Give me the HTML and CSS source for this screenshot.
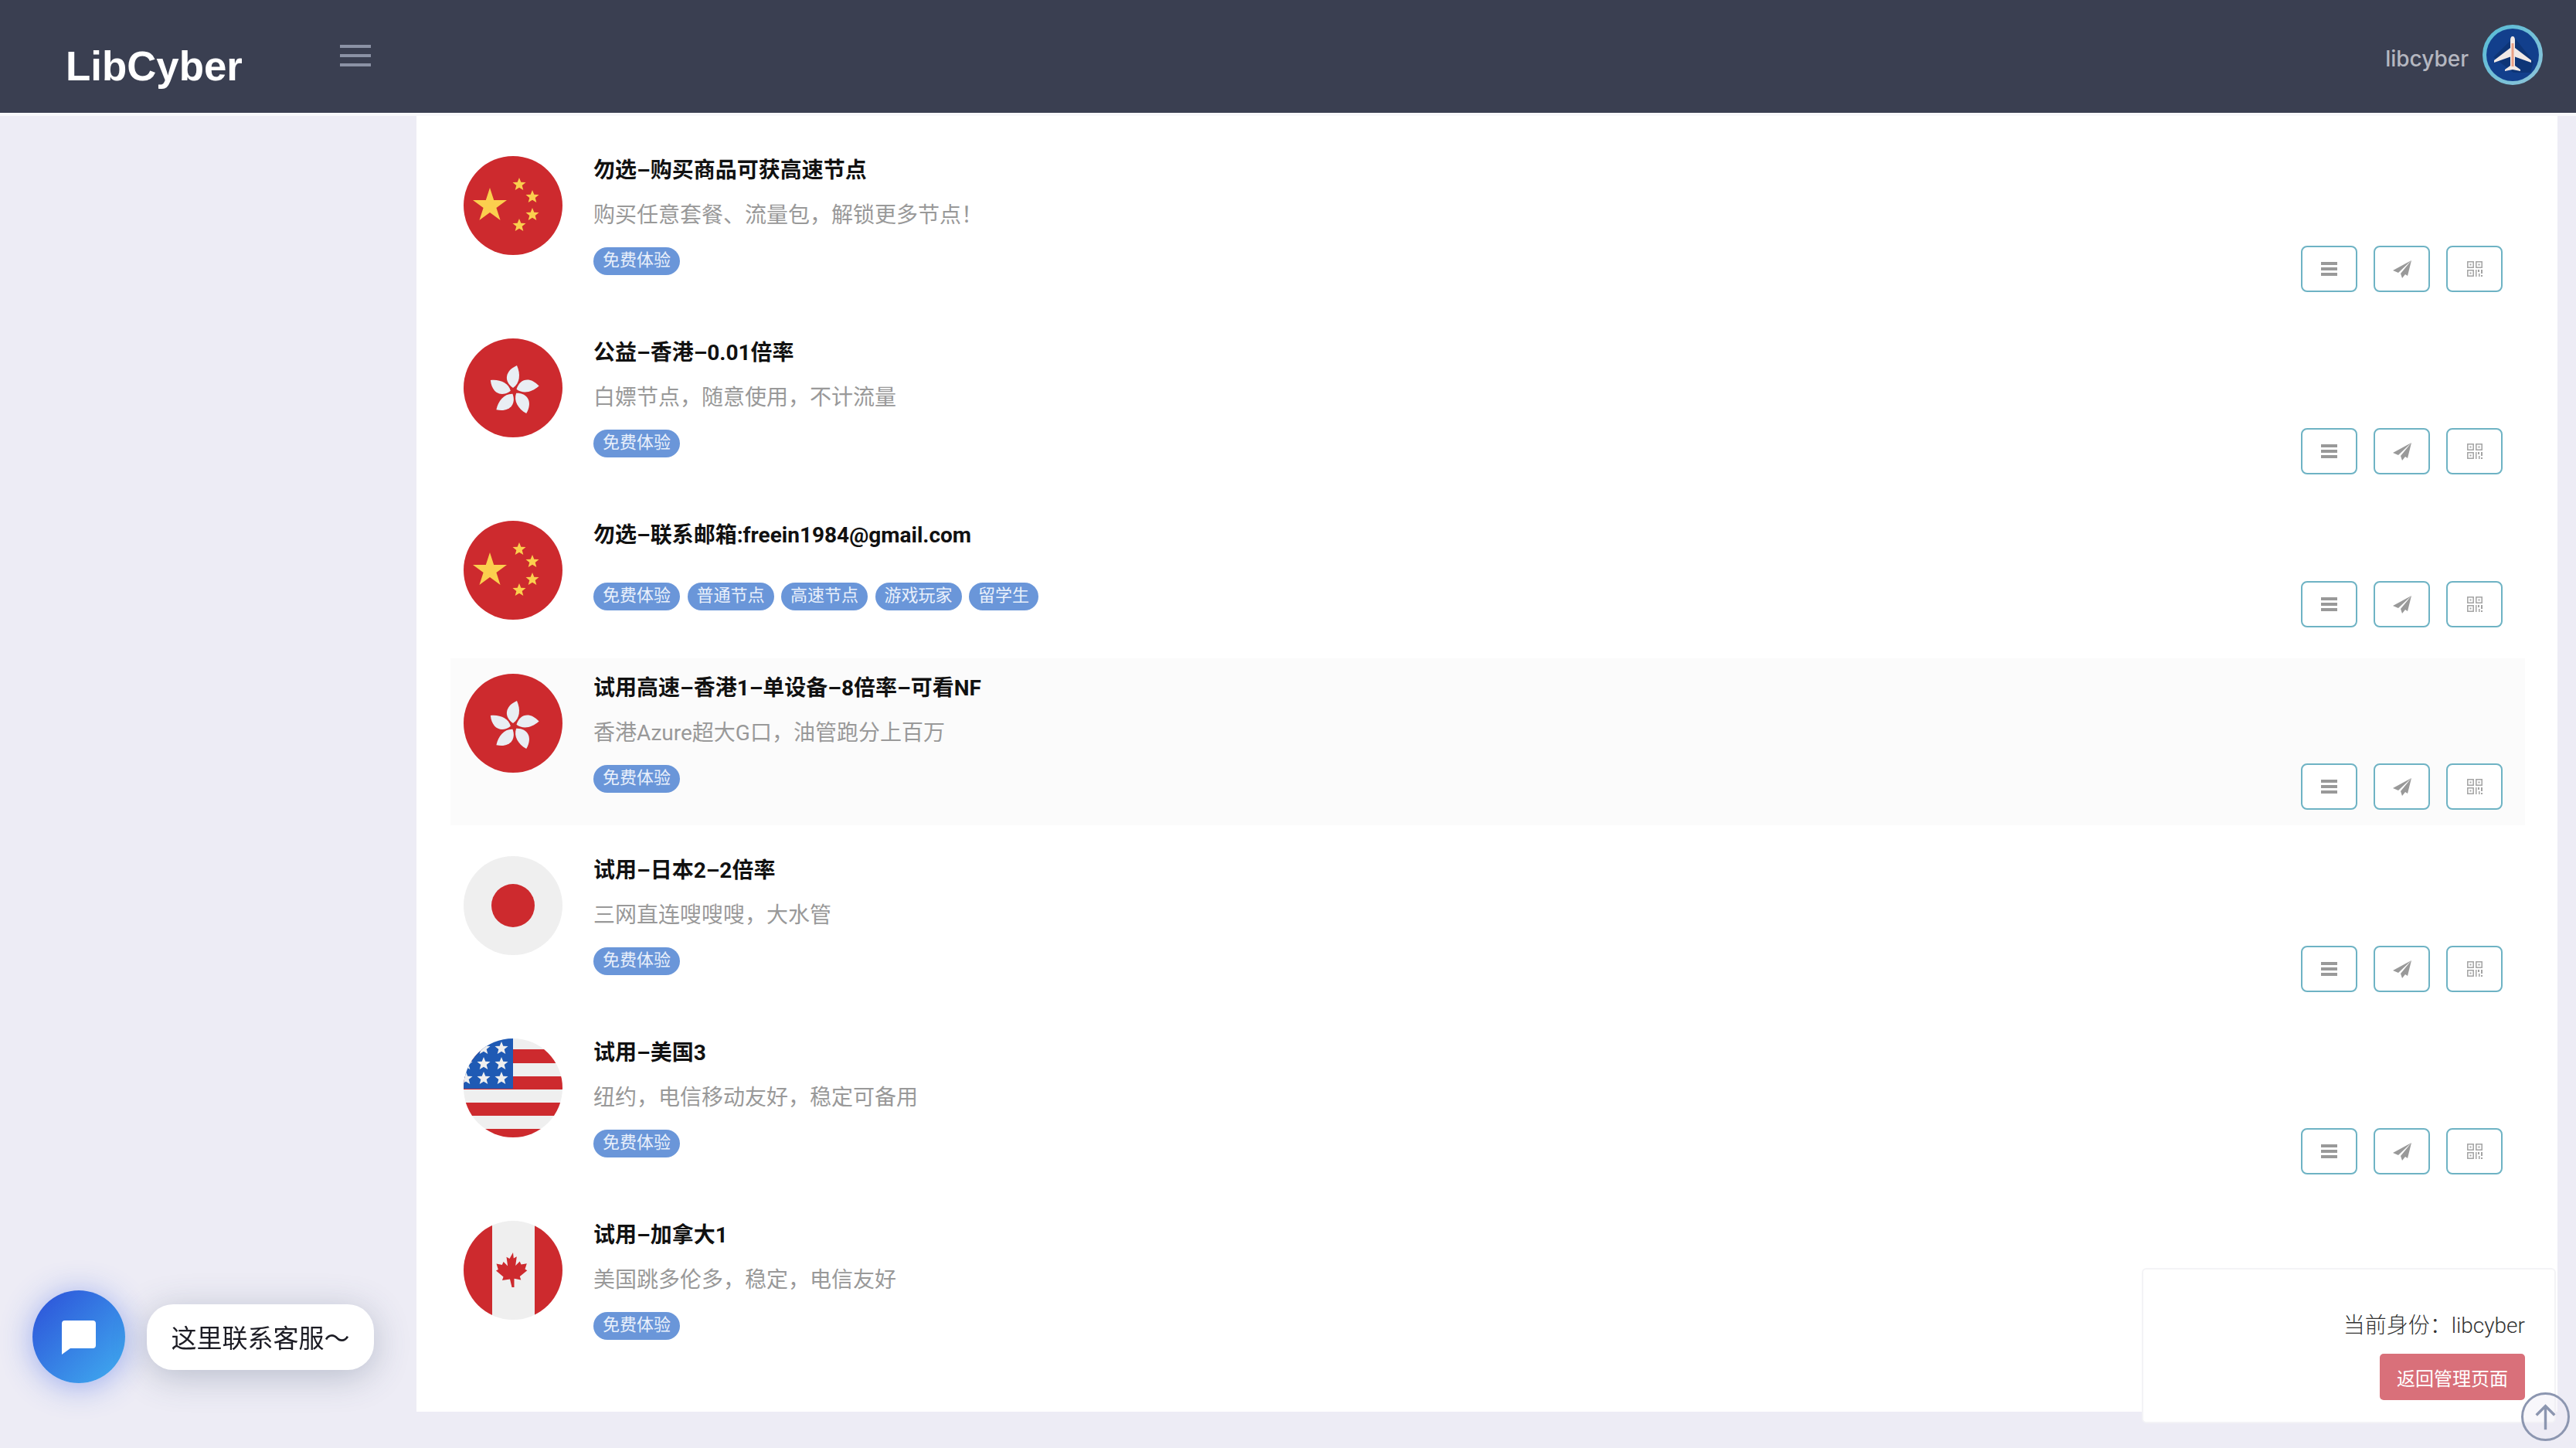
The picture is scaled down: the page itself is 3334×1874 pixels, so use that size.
FILE: index.html
```html
<!DOCTYPE html>
<html lang="zh-CN">
<head>
<meta charset="utf-8">
<title>LibCyber</title>
<link rel="stylesheet" href="styles.css">
</head>
<body>
<svg class="defs" width="0" height="0" aria-hidden="true">
  <defs>
    <symbol id="flag-cn" viewBox="0 0 128 128">
      <circle cx="64" cy="64" r="64" fill="#cd2a2e"/>
      <g fill="#fbcf4e">
        <path d="M34 41l5.200 16h16.800l-13.600 9.900 5.200 16-13.600-9.900-13.600 9.900 5.200-16L12 57h16.800z"/>
        <path d="M72 28l2.300 5.800 6.200.3-4.800 3.900 1.600 6-5.300-3.300-5.300 3.300 1.600-6-4.800-3.900 6.200-.3z"/>
        <path d="M89 44l2.300 5.800 6.200.3-4.800 3.900 1.600 6-5.300-3.300-5.300 3.300 1.600-6-4.800-3.900 6.200-.3z"/>
        <path d="M89 67l2.300 5.800 6.200.3-4.800 3.900 1.600 6-5.300-3.300-5.300 3.300 1.600-6-4.800-3.900 6.200-.3z"/>
        <path d="M72 81l2.300 5.800 6.200.3-4.800 3.900 1.600 6-5.300-3.300-5.300 3.300 1.600-6-4.800-3.900 6.200-.3z"/>
      </g>
    </symbol>
    <symbol id="flag-hk" viewBox="0 0 128 128">
      <circle cx="64" cy="64" r="64" fill="#cd2a2e"/>
      <g transform="translate(65 68)" fill="#e9eef3">
        <path d="M-1-4C-13-12-12-26 4-33 9-22 8-10-1-4z"/>
        <path transform="rotate(72)" d="M-1-4C-13-12-12-26 4-33 9-22 8-10-1-4z"/>
        <path transform="rotate(144)" d="M-1-4C-13-12-12-26 4-33 9-22 8-10-1-4z"/>
        <path transform="rotate(216)" d="M-1-4C-13-12-12-26 4-33 9-22 8-10-1-4z"/>
        <path transform="rotate(288)" d="M-1-4C-13-12-12-26 4-33 9-22 8-10-1-4z"/>
      </g>
    </symbol>
    <symbol id="flag-jp" viewBox="0 0 128 128">
      <circle cx="64" cy="64" r="64" fill="#efefef"/>
      <circle cx="64" cy="64" r="28" fill="#cd2a2e"/>
    </symbol>
    <symbol id="flag-us" viewBox="0 0 128 128">
      <clipPath id="us-clip"><circle cx="64" cy="64" r="64"/></clipPath>
      <g clip-path="url(#us-clip)">
        <rect width="128" height="128" fill="#efefef"/>
        <g fill="#cd2a2e">
          <rect y="14" width="128" height="18"/>
          <rect y="49" width="128" height="17"/>
          <rect y="83" width="128" height="17"/>
          <rect y="117" width="128" height="11"/>
        </g>
        <rect width="64" height="65" fill="#1f5ab4"/>
        <g fill="#efefef">
          <path d="M49 4l2.300 5.800 6.200.3-4.800 3.900 1.600 6-5.300-3.300-5.300 3.300 1.600-6-4.800-3.900 6.200-.3z"/>
          <path d="M26 4l2.300 5.800 6.200.3-4.800 3.900 1.600 6-5.300-3.300-5.300 3.300 1.600-6-4.800-3.900 6.200-.3z"/>
          <path d="M49 24l2.300 5.800 6.200.3-4.800 3.900 1.600 6-5.300-3.300-5.300 3.300 1.600-6-4.800-3.900 6.200-.3z"/>
          <path d="M26 24l2.300 5.800 6.200.3-4.800 3.900 1.600 6-5.300-3.300-5.300 3.300 1.600-6-4.800-3.900 6.200-.3z"/>
          <path d="M3 24l2.300 5.800 6.200.3-4.800 3.900 1.600 6-5.300-3.300-5.300 3.300 1.600-6-4.800-3.900 6.200-.3z"/>
          <path d="M49 43l2.300 5.800 6.200.3-4.800 3.900 1.600 6-5.300-3.300-5.300 3.300 1.600-6-4.800-3.900 6.200-.3z"/>
          <path d="M26 43l2.300 5.800 6.200.3-4.800 3.900 1.600 6-5.300-3.300-5.300 3.300 1.600-6-4.800-3.900 6.200-.3z"/>
          <path d="M3 43l2.300 5.800 6.200.3-4.800 3.900 1.600 6-5.300-3.300-5.300 3.300 1.600-6-4.800-3.900 6.200-.3z"/>
        </g>
      </g>
    </symbol>
    <symbol id="flag-ca" viewBox="0 0 128 128">
      <clipPath id="ca-clip"><circle cx="64" cy="64" r="64"/></clipPath>
      <g clip-path="url(#ca-clip)">
        <rect width="128" height="128" fill="#efefef"/>
        <rect width="37" height="128" fill="#cd2a2e"/>
        <rect x="92" width="36" height="128" fill="#cd2a2e"/>
        <path transform="translate(64 64)" fill="#cd2a2e" d="M0-23l-4.500 8-4-2.300 1.600 11.800-5.500-5.500-1.800 4-7.300-1.400 2.300 7.400-2.800 1.600 9.500 7.800-1.500 4.600 10-1.400L-1.500 22h3L1.500 10.800l8.800 1.800-1.500-4.600 9.500-7.800-2.800-1.600 2.300-7.400-7.300 1.400-1.800-4-5.500 5.500 1.600-11.800-4 2.300z"/>
      </g>
    </symbol>
    <symbol id="i-list" viewBox="0 0 21 18">
      <path d="M0 0h21v4H0zM0 7h21v4H0zM0 14h21v4H0z" fill="#999"/>
    </symbol>
    <symbol id="i-send" viewBox="0 0 24 23">
      <path d="M24 0 0 13l7 3zM24 0 10 17l2 6 4-5 3 2z" fill="#999"/>
    </symbol>
    <symbol id="i-qr" viewBox="0 0 20 20">
      <g fill="none" stroke="#a3a3a3" stroke-width="1.500">
        <rect x=".8" y=".8" width="7.400" height="7.400"/>
        <rect x="11.800" y=".8" width="7.400" height="7.400"/>
        <rect x=".8" y="11.800" width="7.400" height="7.400"/>
      </g>
      <path d="M3.500 3.500h2v2h-2zM14.500 3.500h2v2h-2zM3.500 14.500h2v2h-2zM11 11h1.500v9H11zM14 11h2v3h-2zM18 11h2v5h-2zM15 16h1.500v4H15zM18 18h2v2h-2z" fill="#a3a3a3"/>
    </symbol>
  </defs>
</svg>

<header class="topbar">
  <div class="brand">LibCyber</div>
  <button class="burger" type="button" aria-label="menu"><span></span><span></span><span></span></button>
  <div class="user">
    <span class="user-name">libcyber</span>
    <svg class="avatar" viewBox="0 0 78 78" width="78" height="78">
      <defs>
        <linearGradient id="ring" x1="0" y1="0" x2="1" y2="1">
          <stop offset="0" stop-color="#55bcd6"/>
          <stop offset="1" stop-color="#8fc4d9"/>
        </linearGradient>
      </defs>
      <circle cx="39" cy="39" r="39" fill="url(#ring)"/>
      <circle cx="39" cy="39" r="34" fill="#123f8c"/>
      <path d="M41 16 66 48 62 62 40 62 14 42z" fill="#0e3577"/>
      <path d="M39 15c2 0 3 2 3 5v10l21 16v3L42 41.500V53l7 5v2l-10-2-10 2v-2l7-5V41.500L15 49v-3l21-16V20c0-3 1-5 3-5z" fill="#f1e9e6"/>
      <path d="M37.500 24h3v30h-3z" fill="#ea9f83"/>
    </svg>
  </div>
</header>

<div class="layout">
  <aside class="sidebar"></aside>
  <main class="content">
    <article class="row">
      <svg class="flag"><use href="#flag-cn"/></svg>
      <div class="info">
        <h3 class="title">勿选–购买商品可获高速节点</h3>
        <p class="desc">购买任意套餐、流量包&#xFF0C;解锁更多节点&#xFF01;</p>
        <div class="tags"><span class="tag">免费体验</span></div>
      </div>
      <div class="actions">
        <button class="act" type="button"><svg class="ic-list"><use href="#i-list"/></svg></button>
        <button class="act" type="button"><svg class="ic-send"><use href="#i-send"/></svg></button>
        <button class="act" type="button"><svg class="ic-qr"><use href="#i-qr"/></svg></button>
      </div>
    </article>

    <article class="row">
      <svg class="flag"><use href="#flag-hk"/></svg>
      <div class="info">
        <h3 class="title">公益–香港–0.01倍率</h3>
        <p class="desc">白嫖节点&#xFF0C;随意使用&#xFF0C;不计流量</p>
        <div class="tags"><span class="tag">免费体验</span></div>
      </div>
      <div class="actions">
        <button class="act" type="button"><svg class="ic-list"><use href="#i-list"/></svg></button>
        <button class="act" type="button"><svg class="ic-send"><use href="#i-send"/></svg></button>
        <button class="act" type="button"><svg class="ic-qr"><use href="#i-qr"/></svg></button>
      </div>
    </article>

    <article class="row">
      <svg class="flag"><use href="#flag-cn"/></svg>
      <div class="info">
        <h3 class="title">勿选–联系邮箱:freein1984@gmail.com</h3>
        <p class="desc"></p>
        <div class="tags">
          <span class="tag">免费体验</span><span class="tag">普通节点</span><span class="tag">高速节点</span><span class="tag">游戏玩家</span><span class="tag">留学生</span>
        </div>
      </div>
      <div class="actions">
        <button class="act" type="button"><svg class="ic-list"><use href="#i-list"/></svg></button>
        <button class="act" type="button"><svg class="ic-send"><use href="#i-send"/></svg></button>
        <button class="act" type="button"><svg class="ic-qr"><use href="#i-qr"/></svg></button>
      </div>
    </article>

    <article class="row row-hover">
      <svg class="flag"><use href="#flag-hk"/></svg>
      <div class="info">
        <h3 class="title">试用高速–香港1–单设备–8倍率–可看NF</h3>
        <p class="desc">香港Azure超大G口&#xFF0C;油管跑分上百万</p>
        <div class="tags"><span class="tag">免费体验</span></div>
      </div>
      <div class="actions">
        <button class="act" type="button"><svg class="ic-list"><use href="#i-list"/></svg></button>
        <button class="act" type="button"><svg class="ic-send"><use href="#i-send"/></svg></button>
        <button class="act" type="button"><svg class="ic-qr"><use href="#i-qr"/></svg></button>
      </div>
    </article>

    <article class="row">
      <svg class="flag"><use href="#flag-jp"/></svg>
      <div class="info">
        <h3 class="title">试用–日本2–2倍率</h3>
        <p class="desc">三网直连嗖嗖嗖&#xFF0C;大水管</p>
        <div class="tags"><span class="tag">免费体验</span></div>
      </div>
      <div class="actions">
        <button class="act" type="button"><svg class="ic-list"><use href="#i-list"/></svg></button>
        <button class="act" type="button"><svg class="ic-send"><use href="#i-send"/></svg></button>
        <button class="act" type="button"><svg class="ic-qr"><use href="#i-qr"/></svg></button>
      </div>
    </article>

    <article class="row">
      <svg class="flag"><use href="#flag-us"/></svg>
      <div class="info">
        <h3 class="title">试用–美国3</h3>
        <p class="desc">纽约&#xFF0C;电信移动友好&#xFF0C;稳定可备用</p>
        <div class="tags"><span class="tag">免费体验</span></div>
      </div>
      <div class="actions">
        <button class="act" type="button"><svg class="ic-list"><use href="#i-list"/></svg></button>
        <button class="act" type="button"><svg class="ic-send"><use href="#i-send"/></svg></button>
        <button class="act" type="button"><svg class="ic-qr"><use href="#i-qr"/></svg></button>
      </div>
    </article>

    <article class="row">
      <svg class="flag"><use href="#flag-ca"/></svg>
      <div class="info">
        <h3 class="title">试用–加拿大1</h3>
        <p class="desc">美国跳多伦多&#xFF0C;稳定&#xFF0C;电信友好</p>
        <div class="tags"><span class="tag">免费体验</span></div>
      </div>
      <div class="actions">
        <button class="act" type="button"><svg class="ic-list"><use href="#i-list"/></svg></button>
        <button class="act" type="button"><svg class="ic-send"><use href="#i-send"/></svg></button>
        <button class="act" type="button"><svg class="ic-qr"><use href="#i-qr"/></svg></button>
      </div>
    </article>
  </main>
</div>

<div class="chat">
  <div class="chat-btn">
    <svg viewBox="0 0 44 44" width="44" height="44"><path d="M4 0h36a4 4 0 0 1 4 4v28a4 4 0 0 1-4 4H11L0 44V4a4 4 0 0 1 4-4z" fill="#fff"/></svg>
  </div>
  <div class="chat-bubble">这里联系客服&#xFF5E;</div>
</div>

<aside class="identity">
  <p class="identity-text">当前身份&#xFF1A;libcyber</p>
  <button class="back" type="button">返回管理页面</button>
</aside>

<button class="to-top" type="button" aria-label="top">
  <svg viewBox="0 0 58 58" width="57" height="57"><path d="M29 46V15M17 27 29 15l12 12" fill="none" stroke="#8c96b0" stroke-width="3.500"/></svg>
</button>
</body>
</html>
```
FILE: styles.css
```css
* { box-sizing: border-box; }

html, body { margin: 0; padding: 0; }

body {
  width: 3334px;
  height: 1874px;
  overflow: hidden;
  background: #edecf5;
  font-family: Roboto, "Noto Sans CJK SC", sans-serif;
  color: #333;
}

.defs { position: absolute; }

.topbar {
  height: 150px;
  padding: 0 43px 4px 85px;
  display: flex;
  align-items: center;
  background: #3a3f51;
  border-bottom: 4px solid #f8f8fb;
}

.brand {
  width: 355px;
  font-family: "Liberation Sans", sans-serif;
  font-size: 52.800px;
  font-weight: 700;
  color: #fff;
  margin-top: 28px;
}

.burger {
  width: 40px;
  height: 28px;
  padding: 0;
  margin-top: 2px;
  border: 0;
  background: none;
  display: flex;
  flex-direction: column;
  justify-content: space-between;
}

.burger span {
  display: block;
  height: 4px;
  background: #8b92a5;
}

.user {
  margin-left: auto;
  display: flex;
  align-items: center;
  gap: 18px;
}

.user-name {
  font-family: Inter, sans-serif;
  font-size: 28px;
  font-weight: 500;
  color: #b5b7c0;
  margin-top: 10px;
}

.avatar { display: block; }

.layout {
  display: flex;
  padding-right: 24px;
}

.sidebar { width: 539px; flex: none; }

.content {
  flex: 1;
  height: 1677px;
  padding: 32px 42px 0 44px;
  background: #fff;
}

.row {
  display: flex;
  margin-bottom: 20px;
  padding: 20px 29px 20px 17px;
}

.row-hover { background: #fbfbfb; }

.flag {
  width: 128px;
  height: 128px;
  flex: none;
  margin-right: 40px;
}

.info {
  flex: 1;
  display: flex;
  flex-direction: column;
  padding-bottom: 22px;
}

.title {
  margin: 2px 0 22px;
  font-size: 28px;
  line-height: 34px;
  font-weight: 700;
  color: #111;
}

.desc {
  margin: 0 0 22px;
  min-height: 0;
  font-size: 28px;
  line-height: 38px;
  color: #999;
}

.tags {
  display: flex;
  gap: 9.500px;
}

.tag {
  height: 36px;
  padding: 0 12px;
  border-radius: 18px;
  background: #6a96d9;
  color: #e9f0fb;
  font-size: 22px;
  line-height: 34px;
}

.actions {
  display: flex;
  align-items: flex-end;
  gap: 21px;
}

.act {
  width: 73px;
  height: 60px;
  padding: 0;
  border: 2px solid #6eb3c4;
  border-radius: 8px;
  background: #fff;
  display: flex;
  align-items: center;
  justify-content: center;
}

.ic-list { width: 21px; height: 18px; }
.ic-send { width: 24px; height: 23px; }
.ic-qr { width: 20px; height: 20px; }

.chat {
  position: fixed;
  left: 42px;
  top: 1670px;
  display: flex;
  align-items: center;
  gap: 28px;
}

.chat-btn {
  width: 120px;
  height: 120px;
  border-radius: 50%;
  background: linear-gradient(135deg, #2c4fd8, #40aef0);
  box-shadow: 0 4px 40px rgba(50, 90, 230, .45);
  display: flex;
  align-items: center;
  justify-content: center;
}

.chat-btn svg { margin-top: 2px; }

.chat-bubble {
  width: 294px;
  height: 85px;
  border-radius: 34px;
  background: #fff;
  box-shadow: 0 8px 46px rgba(60, 80, 110, .3);
  font-family: "Noto Sans CJK SC", sans-serif;
  font-size: 33px;
  line-height: 85px;
  text-align: center;
  color: #1c1c24;
}

.identity {
  position: fixed;
  right: 26px;
  top: 1641px;
  width: 536px;
  height: 201px;
  padding: 54px 38px 0 0;
  background: #fff;
  border: 2px solid #f3f3f6;
  border-radius: 6px;
  display: flex;
  flex-direction: column;
  align-items: flex-end;
}

.identity-text {
  margin: 0;
  font-size: 28px;
  line-height: 38px;
  font-weight: 300;
  color: #333;
}

.back {
  margin-top: 17px;
  width: 188px;
  height: 60px;
  padding: 0;
  border: 0;
  border-radius: 5px;
  background: #d9707a;
  color: #fff;
  font-family: "Noto Sans CJK SC", sans-serif;
  font-size: 24px;
}

.to-top {
  position: fixed;
  left: 3263px;
  top: 1802px;
  width: 63px;
  height: 63px;
  padding: 0;
  border: 3px solid #8c96b0;
  border-radius: 50%;
  background: rgba(237, 236, 245, .4);
  display: flex;
  align-items: center;
  justify-content: center;
}
```
